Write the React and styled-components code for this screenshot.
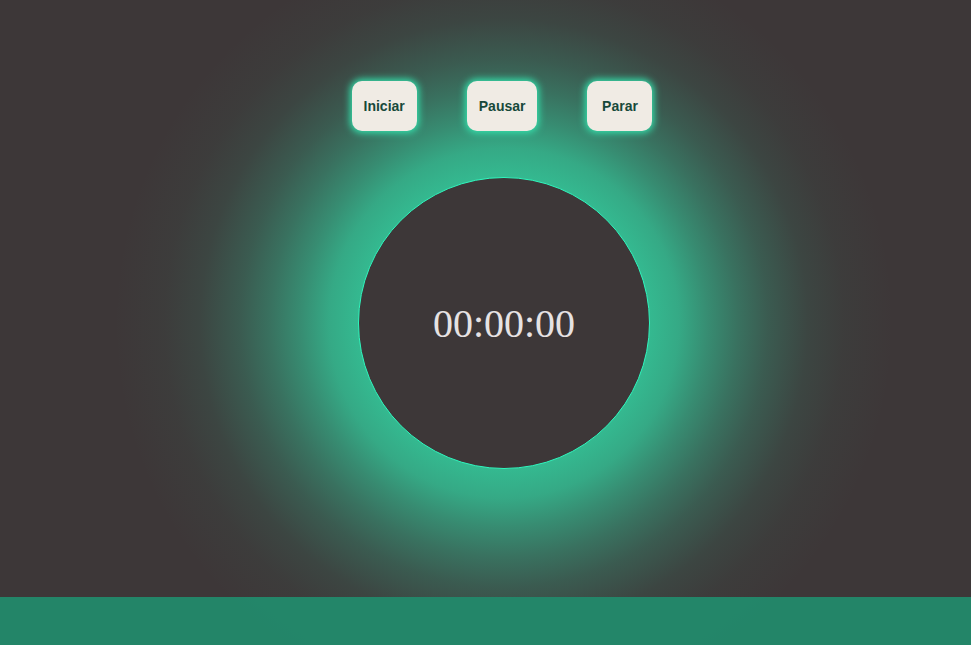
import React from "react";
import styled, { createGlobalStyle } from "styled-components";

const GlobalStyle = createGlobalStyle`
  html {
    background-color: #3d3738;
  }

  body {
    margin: 0;
    overflow: hidden;
  }
`;

const Page = styled.div`
  height: 100vh;
  display: flex;
  flex-direction: column;
  overflow: hidden;
`;

const Main = styled.main`
  flex: 1;
  display: flex;
  flex-direction: column;
  align-items: center;
  padding: 81px 0 0 37px;
`;

const Controls = styled.div`
  position: relative;
  z-index: 3;
  display: flex;
  gap: 50px;
  margin: 0 4px 46px 0;
`;

const Button = styled.button`
  height: 50px;
  min-width: 65px;
  padding: 0 12px;
  border: none;
  border-radius: 10px;
  background-color: #f0ebe4;
  color: #17493a;
  font-family: "Liberation Sans", Arial, sans-serif;
  font-size: 14px;
  font-weight: bold;
  box-shadow: 0 0 7px 2px #34e2ad;
  cursor: pointer;
`;

const Dial = styled.div`
  position: relative;
  width: 290px;
  height: 290px;
  border-radius: 50%;
  border: 1px solid #2ff7be;
  background-color: #3d3738;
  display: flex;
  align-items: center;
  justify-content: center;

  &::before {
    content: "";
    position: absolute;
    z-index: -1;
    left: 50%;
    top: 50%;
    width: 800px;
    height: 800px;
    margin: -400px 0 0 -400px;
    border-radius: 50%;
    background: radial-gradient(
      circle at center,
      rgba(52, 188, 146, 1) 140px,
      rgba(52, 188, 146, 0.86) 175px,
      rgba(52, 188, 146, 0.64) 204px,
      rgba(52, 188, 146, 0.44) 234px,
      rgba(52, 188, 146, 0.27) 264px,
      rgba(52, 188, 146, 0.11) 304px,
      rgba(52, 188, 146, 0.04) 340px,
      rgba(52, 188, 146, 0) 390px
    );
  }
`;

const Time = styled.span`
  font-family: "Liberation Serif", "Times New Roman", serif;
  font-size: 40px;
  color: #e6e2e3;
`;

const Footer = styled.footer`
  position: relative;
  z-index: 2;
  height: 48px;
  background-color: rgba(34, 136, 106, 0.97);
`;

const App = () => {
  return (
    <Page>
      <GlobalStyle />
      <Main>
        <Controls>
          <Button>Iniciar</Button>
          <Button>Pausar</Button>
          <Button>Parar</Button>
        </Controls>
        <Dial>
          <Time>00:00:00</Time>
        </Dial>
      </Main>
      <Footer />
    </Page>
  );
};

export default App;
